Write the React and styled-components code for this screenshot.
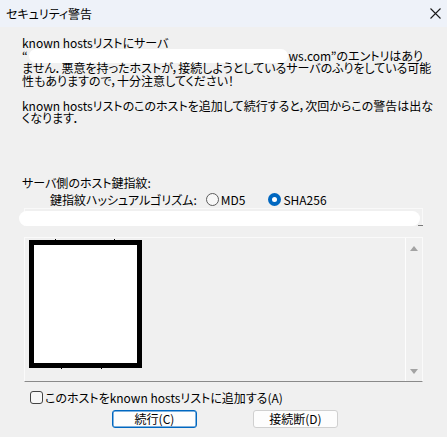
import React from "react";
import styled, { createGlobalStyle } from "styled-components";

const Global = createGlobalStyle`
  html, body { margin: 0; padding: 0; background: #f0f0f0; }
  body {
    font-family: "Noto Sans CJK JP", "Liberation Sans", sans-serif;
    font-size: 12px;
    color: #000;
    font-feature-settings: "palt";
  }
`;

const Window = styled.div`
  width: 447px;
  height: 437px;
  display: flex;
  flex-direction: column;
  background: #f0f0f0;
  overflow: hidden;
`;

const TitleBar = styled.div`
  height: 27px;
  flex: none;
  background: #eef2f9;
  display: flex;
  align-items: center;
  justify-content: space-between;
  padding: 0 5px 1px 6px;
  box-sizing: border-box;
  font-size: 12px;
`;

const CloseBtn = styled.svg`
  width: 11px;
  height: 11px;
  margin-right: 1px;
`;

const Body = styled.div`
  flex: 1;
  display: flex;
  flex-direction: column;
  padding: 0 24px 0 22px;
`;

const Message = styled.div`
  margin-top: 10px;
  line-height: 12.5px;
`;

const Line = styled.div`
  white-space: nowrap;
  height: 12.5px;
  display: flex;
  align-items: center;
`;

const Redact = styled.span`
  display: inline-block;
  width: 260px;
  height: 14px;
  border-radius: 7px;
  background: #fff;
  margin: 0 0 0 1px;
`;

const Label = styled.div`
  margin-top: ${(p) => p.$mt || 0}px;
  margin-left: ${(p) => p.$ml || 0}px;
  line-height: 16px;
  display: flex;
  align-items: center;
  white-space: nowrap;
`;

const RadioItem = styled.label`
  display: inline-flex;
  align-items: center;
  margin-left: ${(p) => p.$ml}px;
  gap: 2px;
`;

const RadioDot = styled.span`
  width: 13px;
  height: 13px;
  box-sizing: border-box;
  border-radius: 50%;
  border: ${(p) => (p.$on ? "none" : "1px solid #5c5c5c")};
  background: ${(p) => (p.$on ? "#0067c0" : "#f7f7f7")};
  display: inline-flex;
  align-items: center;
  justify-content: center;
  &::after {
    content: "";
    width: 5px;
    height: 5px;
    border-radius: 50%;
    background: #fff;
    display: ${(p) => (p.$on ? "block" : "none")};
  }
`;

const Field = styled.div`
  position: relative;
  margin: 0 0 0 2px;
  height: 18px;
  border-top: 1px solid #f9f9f9;
  border-left: 1px solid #f9f9f9;
  border-right: 1px solid #f9f9f9;
  box-sizing: border-box;
  &::after {
    content: "";
    position: absolute;
    right: -1px;
    bottom: 0;
    width: 5px;
    height: 1px;
    background: #7a7a7a;
  }
`;

const FieldCover = styled.div`
  position: absolute;
  left: -6px;
  top: 2px;
  right: 2px;
  height: 15px;
  border-radius: 8px;
  background: #fff;
`;

const ScrollBox = styled.div`
  margin: 11px 0 0 2px;
  height: 145px;
  box-sizing: border-box;
  border-top: 1px solid #fafafa;
  border-left: 1px solid #fafafa;
  border-right: 1px solid #fafafa;
  border-bottom: 1px solid #8a8a8a;
  display: flex;
`;

const Canvas = styled.div`
  flex: 1;
  padding: 2px 0 0 4px;
`;

const Frame = styled.div`
  position: relative;
  width: 113px;
  height: 128px;
  box-sizing: border-box;
  border: 5px solid #000;
  background: #fff;
`;

const Tick = styled.span`
  position: absolute;
  left: ${(p) => p.$x}px;
  ${(p) => (p.$bottom ? "bottom: -6px;" : "top: -6px;")}
  width: 1px;
  height: 1px;
  background: #000;
`;

const ScrollBar = styled.div`
  width: 16px;
  border-left: 1px solid #fdfdfd;
  display: flex;
  flex-direction: column;
  justify-content: space-between;
  align-items: center;
  padding: 8px 0 7px;
`;

const Arrow = styled.svg`
  width: 8px;
  height: 5px;
`;

const CheckRow = styled.label`
  margin: 9px 0 0 8px;
  display: flex;
  align-items: center;
  gap: 2px;
  line-height: 14px;
  white-space: nowrap;
`;

const CheckBox = styled.span`
  width: 13px;
  height: 13px;
  box-sizing: border-box;
  border: 1px solid #444;
  border-radius: 3px;
  background: #f7f7f7;
`;

const Buttons = styled.div`
  margin: 5px 0 0 90px;
  display: flex;
  gap: 56px;
`;

const Button = styled.button`
  width: 85px;
  height: 18px;
  box-sizing: border-box;
  padding: 0;
  font: inherit;
  font-size: 12px;
  line-height: 16px;
  color: #000;
  background: #fdfdfd;
  border: 1px solid ${(p) => (p.$primary ? "#0067c0" : "#d0d0d0")};
  border-radius: 3px;
  ${(p) => (p.$primary ? "box-shadow: inset 0 0 0 0.5px #0067c0;" : "")}
`;

export default function App() {
  return (
    <>
      <Global />
      <Window>
        <TitleBar>
          <span>セキュリティ警告</span>
          <CloseBtn viewBox="0 0 11 11">
            <path d="M0.5 0.5 L10.5 10.5 M10.5 0.5 L0.5 10.5" stroke="#1a1a1a" strokeWidth="1.1" fill="none" />
          </CloseBtn>
        </TitleBar>
        <Body>
          <Message>
            <Line>known hostsリストにサーバ</Line>
            <Line>
              “<Redact />ws.com”のエントリはあり
            </Line>
            <Line>ません．悪意を持ったホストが，接続しようとしているサーバのふりをしている可能</Line>
            <Line>性もありますので，十分注意してください！</Line>
            <Line />
            <Line>known hostsリストのこのホストを追加して続行すると，次回からこの警告は出な</Line>
            <Line>くなります．</Line>
          </Message>
          <Label $mt={50}>サーバ側のホスト鍵指紋:</Label>
          <Label $ml={28} $mt={1}>
            鍵指紋ハッシュアルゴリズム:
            <RadioItem $ml={9}>
              <RadioDot />
              MD5
            </RadioItem>
            <RadioItem $ml={23}>
              <RadioDot $on />
              SHA256
            </RadioItem>
          </Label>
          <Field>
            <FieldCover />
          </Field>
          <ScrollBox>
            <Canvas>
              <Frame>
                <Tick $x={21} />
                <Tick $x={80} />
                <Tick $x={27} $bottom />
                <Tick $x={67} $bottom />
              </Frame>
            </Canvas>
            <ScrollBar>
              <Arrow viewBox="0 0 8 5">
                <path d="M0 5 L4 0 L8 5 Z" fill="#a3a3a3" />
              </Arrow>
              <Arrow viewBox="0 0 8 5">
                <path d="M0 0 L8 0 L4 5 Z" fill="#a3a3a3" />
              </Arrow>
            </ScrollBar>
          </ScrollBox>
          <CheckRow>
            <CheckBox />
            このホストをknown hostsリストに追加する(A)
          </CheckRow>
          <Buttons>
            <Button $primary>続行(C)</Button>
            <Button>接続断(D)</Button>
          </Buttons>
        </Body>
      </Window>
    </>
  );
}
